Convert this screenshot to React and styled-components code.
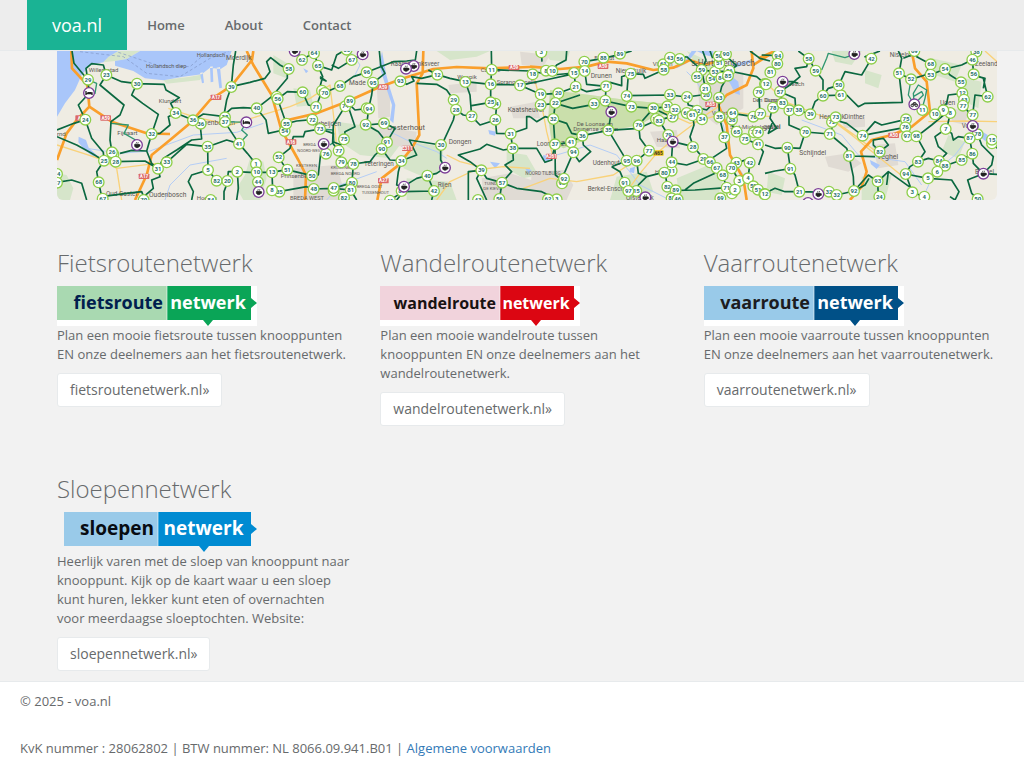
import React from "react";
import styled, { createGlobalStyle } from "styled-components";

const GlobalStyle = createGlobalStyle`
  * {
    box-sizing: border-box;
  }

  body {
    margin: 0;
    background: #f2f2f2;
    color: #676a6c;
    font-family: "Open Sans", "Noto Sans", sans-serif;
    font-size: 13px;
    line-height: 19px;
  }
`;

const Navbar = styled.nav`
  background: #ededed;
  border-bottom: 1px solid #e7eaec;
`;

const NavInner = styled.div`
  max-width: 970px;
  margin: 0 auto;
  display: flex;
  flex-wrap: wrap;
`;

const Brand = styled.a`
  padding: 0 25px;
  background: #1ab394;
  color: white;
  font-size: 18px;
  line-height: 50px;
  text-decoration: none;
`;

const NavLink = styled.a`
  padding: 0 20px;
  color: #676a6c;
  font-weight: 600;
  line-height: 50px;
  text-decoration: none;
`;

const Content = styled.main`
  max-width: 970px;
  margin: 0 auto;
  padding-left: 30px;
  padding-bottom: 10px;
`;

const Map = styled.svg`
  display: block;
  width: 100%;
  border-radius: 0 0 6px 6px;
  font-family: Roboto, "Liberation Sans", sans-serif;
`;

const Networks = styled.div`
  display: grid;
  grid-template-columns: repeat(3, 1fr);
  gap: 50px 30px;
  margin-top: 50px;

  @media only screen and (max-width: 768px) {
    grid-template-columns: 1fr;
  }
`;

const Title = styled.h2`
  margin: 0 0 10px;
  font-size: 24px;
  font-weight: 300;
  line-height: 26px;
`;

const Logo = styled.svg`
  display: block;
  width: 200px;
  height: 40px;
  font-weight: 700;
`;

const Text = styled.p`
  margin: 0 0 9px;
`;

const Button = styled.a`
  display: inline-block;
  padding: 6px 12px;
  background: white;
  border: 1px solid #e7eaec;
  border-radius: 3px;
  color: #676a6c;
  font-size: 14px;
  line-height: 20px;
  text-decoration: none;
  vertical-align: top;
`;

const Footer = styled.footer`
  display: flex;
  flex-direction: column;
  gap: 28px;
  padding: 10px 20px;
  background: white;
  border-top: 1px solid #e7eaec;
`;

const FooterLink = styled.a`
  color: #337ab7;
  text-decoration: none;
`;

// every region of the map has its own origin, dx moves it to its place
// nodes: [x, y, number], pois: [x, y, kind], labels: [x, y, text, size]
const regions = [
  {
    dx: -21,
    water: [
      "M21 18H270L205 18L175 36L160 52L120 60L95 90L75 135L45 175L21 215Z",
      "M270 18H545L530 60L512 72L480 68L455 88L400 95L340 106L285 100L250 78L195 62L195 48L230 42Z",
      "M86 275L108 285L116 308L140 330L130 336L100 310L85 292Z",
      "M480 65L482 112L490 110L488 64ZM500 68L508 130L516 128L510 66ZM450 84L456 115L462 113L458 82Z",
    ],
    green: [
      "M160 52L195 48L230 42L270 18H205L175 36Z",
      "M340 105L420 95L460 88L450 105L350 116Z",
      "M21 385L50 390L70 430L60 465H21Z",
      "M600 340L640 350L650 400L630 465H580L560 430L585 390Z",
      "M670 30L720 60L710 100L670 85Z",
    ],
    roads: [
      "M64 18L66 70L112 120L118 185L80 225L50 265L21 345",
      "M118 185L185 230L290 265L360 267",
      "M610 18L606 45L545 122L480 165L420 235L360 285L305 330L290 390L255 465",
      "M590 18L610 60L665 150L690 240L700 270",
    ],
    minor: [
      "M21 300L100 325L160 345L200 370L215 465",
      "M355 190L430 215L540 240L620 215L720 185",
      "M120 90L118 185M200 370L320 355",
    ],
    streams: ["M110 310L210 325L300 318L430 270L560 262L640 235", "M345 465L360 420L420 360L530 340"],
    routes: [
      "M66 18L72 55L113 104L118 144L85 180L106 224L72 235L21 255",
      "M113 104L108 70L125 56L160 60L169 90L150 120L222 180L210 210L183 230L180 285L186 322",
      "M169 90L215 110L261 116L342 118L348 135L388 158L362 175L377 204",
      "M261 116L245 150L278 175L325 208L305 267L290 318L245 316L210 325",
      "M377 204L355 215L360 240L330 265L305 267",
      "M377 204L405 215L430 226L460 207L525 215",
      "M450 235L455 282L425 285L380 315L340 340L324 371",
      "M106 224L125 280L160 322L162 347",
      "M21 275L80 300L125 325L162 347L140 380L146 412L155 455",
      "M197 350L285 348L324 371L350 352L410 298L473 305L530 285L567 296",
      "M290 318L305 355L324 371L330 395L305 405L310 430L275 460",
      "M21 385L35 395M21 412L65 405L95 415L110 465",
      "M155 455L230 445L275 440L285 465",
      "M557 18L550 60L544 125L530 165L522 210",
      "M544 125L600 112L645 100L660 80L650 50L662 38L690 60L712 72",
      "M522 210L545 190L580 188L620 190L665 155L712 100V72M620 190L648 225L655 265L700 255L709 236L683 162",
      "M525 232L567 296L592 325L618 357L620 382L624 411L625 440",
      "M473 305L474 375L500 407L532 408L535 380L562 380L600 382L666 382L710 374",
      "M474 375L425 390L415 410L430 440L425 465",
      "M562 380L565 430L560 465M666 382L668 436",
      "M534 408L522 440L522 465",
    ],
    paths: ["M113 104L140 115L135 145L118 144", "M183 235L235 240L222 265L262 288L260 300", "M525 230L590 232L575 255L592 270L567 296"],
    badges: [[498, 157, "A17"], [167, 219, "A59"], [282, 394, "A17"], [92, 219, "A4"], [723, 291, "A16"]],
    labels: [
      [116, 80, "Willemstad", 18], [288, 70, "Hollandsch diep", 17], [440, 36, "Hollandsch", 17], [528, 46, "Moerdijk", 20],
      [326, 174, "Klundert", 18], [202, 271, "Fijnaart", 18], [440, 240, "Zevenbergen", 20],
      [168, 452, "Oud Gastel", 19], [297, 456, "Oudenbosch", 20], [21, 274, "rnd", 18],
      [440, 465, "Hoeven", 18], [692, 399, "Prinsenbeek", 18],
    ],
    nodes: [
      [21, 387, 54], [21, 413, 57], [114, 104, 29], [169, 90, 23], [261, 116, 30], [106, 224, 24], [377, 204, 34], [452, 236, 36],
      [429, 226, 36], [305, 267, 32], [190, 328, 27], [186, 322, 26], [197, 350, 28], [162, 347, 25],
      [324, 371, 31], [350, 352, 33], [146, 412, 68], [158, 461, 67], [281, 465, 70], [544, 126, 39],
      [525, 217, 38], [525, 231, 37], [567, 296, 41], [473, 305, 35], [474, 375, 5], [500, 407, 82],
      [532, 408, 20], [562, 380, 2], [618, 357, 1], [620, 382, 10], [624, 411, 44], [666, 382, 13],
      [688, 440, 35], [666, 436, 8], [620, 190, 40], [680, 155, 57], [683, 162, 56], [716, 72, 58],
      [704, 258, 54], [709, 236, 55], [686, 337, 52], [712, 374, 51], [482, 465, 84],
    ],
    pois: [[117, 144, "bed"], [261, 300, "cup"], [589, 232, "bed"], [626, 441, "cup"]],
  },
  {
    dx: 699,
    water: [
      "M276 18L289 90L300 130L316 180L310 235L300 225L306 180L289 130L268 62Z",
      "M595 255L618 260L615 272L598 268ZM40 70L55 78L48 85ZM600 350L630 355L615 370Z",
    ],
    green: [
      "M140 230L250 245L330 300L300 340L210 330L150 290Z",
      "M360 290L460 305L455 380L410 400L340 370Z",
      "M350 400L480 410L500 465H350Z",
      "M650 320L710 330L745 390L700 400L650 370Z",
      "M10 130L60 135L70 180L20 185Z",
      "M440 18H600L560 35L480 45Z",
    ],
    urban: ["M270 245L380 260L375 310L300 300L265 275Z", "M10 370L140 360L170 465H10Z", "M260 115L300 125L300 215L265 220Z", "M475 120L560 110L560 140L480 145Z", "M575 400L660 385L740 410L760 465H580Z"],
    roads: [
      "M400 18L398 85L380 115L388 270L365 310L320 365L275 400L262 465",
      "M-20 228L80 205L170 170L260 130L340 100L430 72L500 66L600 70L720 66",
      "M-20 265L0 300L25 345L48 390L45 465",
    ],
    minor: ["M0 185L60 160L120 120L135 250L140 310", "M440 465L480 410L555 375L640 365L720 370", "M470 330L510 350L590 370"],
    streams: ["M300 260L360 290L440 320L470 340", "M180 18L210 60L195 90", "M110 465L150 420L260 380"],
    routes: [
      "M20 18L36 45L72 22L84 62L125 75L140 30L160 18",
      "M185 45L145 70L125 60M185 45L218 28",
      "M84 62L98 95L90 125L103 143L150 123L190 95L230 82",
      "M-37 162L-8 140L38 142L55 180L78 186L96 137M90 95L108 108L90 100",
      "M268 18L272 60L285 85L250 113L245 150L236 190L230 240L265 260L290 292L275 312L300 345L334 347",
      "M230 82L310 50L350 48L376 45L380 18",
      "M331 108L350 118L372 108L365 95L395 100L442 89L480 100L526 110L602 118L690 120",
      "M380 115L440 118L470 135L491 165L497 194L520 210L545 214L570 240L616 225",
      "M526 110L540 150L545 214M545 182L602 172L602 118L605 74L720 78M605 74L604 18",
      "M497 194L490 225L460 290L452 300L358 285L380 330L334 347L325 380L320 420L340 425L380 400L412 392L440 385L465 368",
      "M452 300L452 345L465 368",
      "M602 172L620 178L616 225L620 265L662 266L710 250V215H720",
      "M668 310L640 315L590 298L570 312L505 330L540 350L574 376L590 400L636 413",
      "M662 266L668 310L670 345L645 360L665 380L636 413M636 413L628 465",
      "M574 376L535 380V465M574 376L560 400L590 465",
      "M180 180L165 185L130 240L128 290L155 300",
      "M236 190L195 195L170 170L195 245L165 260L162 283",
      "M-11 236L20 228L66 224L90 252L130 265L128 295L146 317",
      "M90 252L45 260L40 275L10 275L0 310L-34 337L-10 374",
      "M108 326L92 325L85 390L65 392L-10 374",
      "M146 317L154 352L190 357L240 350L255 330L275 312",
      "M-34 440L50 425L71 432L131 430L182 435L200 465M186 413L131 430",
      "M282 235L230 240M282 235L315 250L290 292M190 357L186 413",
      "M412 392L432 438L425 465M340 440L432 438",
      "M415 75L442 89",
      "M300 465L340 440L320 465",
    ],
    paths: ["M90 252L130 255L132 290L120 300"],
    badges: [[279, 126, "A59"], [672, 68, "A59"], [352, 310, "E311"], [280, 407, "A27"]],
    labels: [
      [177, 120, "Made", 20], [302, 63, "Raamsdonksveer", 19], [291, 256, "Oosterhout", 23], [502, 103, "Waspik", 18],
      [572, 80, "Capelle", 18], [620, 118, "Sprang-Capelle", 18], [653, 201, "Kaatsheuvel", 20], [476, 298, "Dongen", 20],
      [222, 363, "Teteringen", 19], [443, 427, "Rijen", 19], [65, 244, "Terheijden", 19], [18, 367, "KESTEREN", 13],
      [122, 373, "KRUIDENBERG", 12], [122, 390, "BREDA NOORD", 13], [200, 430, "BREDA OOST", 13], [215, 446, "TUSSENHOUT", 13],
      [0, 465, "BREDA WEST", 17], [583, 420, "TUINDORP", 13], [580, 436, "DE KIEVIT", 13], [40, 304, "BREDA", 12],
      [22, 320, "NOORD-WEST", 12],
    ],
    nodes: [
      [72, 25, 64], [36, 45, 62], [84, 62, 65], [185, 45, 67], [170, 14, 66], [230, 82, 96], [249, 113, 95],
      [150, 123, 68], [38, 142, 60], [96, 137, 69], [104, 144, 70], [78, 186, 71], [166, 184, 74],
      [179, 169, 89], [230, 190, 93], [237, 191, 94], [227, 239, 92], [282, 235, 69], [67, 224, 72], [90, 252, 73],
      [162, 283, 75], [146, 317, 77], [108, 326, 76], [154, 352, 79], [190, 357, 78], [291, 292, 91],
      [275, 312, 90], [334, 348, 34], [66, 392, 50], [71, 432, 48], [131, 437, 46], [131, 429, 47], [186, 413, 80],
      [182, 435, 81], [162, 458, 82], [331, 109, 93], [442, 89, 12], [526, 111, 13], [605, 74, 11],
      [602, 118, 16], [690, 121, 17], [491, 165, 29], [498, 194, 28], [545, 214, 27], [616, 176, 24],
      [602, 172, 25], [616, 224, 26], [662, 266, 31], [668, 310, 38], [453, 300, 30], [412, 392, 40],
      [432, 438, 42], [574, 376, 39], [636, 413, 57], [335, 438, 87], [628, 462, 56], [564, 465, 43], [300, 467, 41],
    ],
    pois: [[14, 18, "cup"], [218, 28, "cup"], [371, 63, "cup"], [348, 71, "cup"], [101, 297, "cup"], [465, 368, "cup"], [342, 425, "cup"]],
  },
  {
    dx: 1419,
    water: [
      "M500 18H550V36L525 30ZM560 25L590 35L580 50L565 45Z",
      "M585 70L600 90L625 110L630 150L615 145L600 115L582 95Z",
      "M600 60L660 45L665 52L610 70ZM300 370L315 365L312 385L298 380Z",
      "M500 18L470 55L440 70L435 64L465 48L485 18Z",
      "M40 330L62 335L55 352L38 345ZM-15 370L5 375L-5 385Z",
    ],
    green: [
      "M60 135L180 150L290 165L420 178L440 200L370 215L330 240L235 258L180 250L165 285L100 310L65 290L55 220Z",
      "M470 18L560 60L540 90L500 60Z",
      "M260 395L350 380L370 440L300 465H240Z",
      "M440 400L560 350L580 400L560 465H450Z",
      "M40 18L120 18L110 50L60 45Z",
    ],
    urban: ["M500 95L640 80L640 190L560 240L510 200Z", "M5 380L100 375L130 420L110 465H0Z", "M360 260L440 255L450 310L380 305Z", "M-30 20L60 30L40 65L-25 60Z", "M-60 185L20 170L30 220L-50 220Z"],
    roads: [
      "M0 65L90 72L170 65L230 50L290 55L370 75L430 68L480 45L520 60L560 50",
      "M665 18L670 70L650 120L590 150L565 180",
      "M720 28L670 60M565 180L590 240L600 330L640 400L650 465",
    ],
    minor: [
      "M10 90L35 180L50 260L70 340",
      "M-20 430L60 400L140 410L250 390L310 350L330 330",
      "M400 200L480 235L600 200L720 215",
      "M565 185L520 215L440 275L380 325L330 385L290 440",
    ],
    streams: ["M470 80L500 110L540 180L580 240L600 330L660 420", "M80 330L180 300L260 330L330 420L420 465"],
    routes: [
      "M0 78L67 90L132 84L164 78L163 50M110 18L108 45L80 60L67 78M34 20L36 50",
      "M163 50L220 40L270 28L305 18",
      "M-30 121L60 102L137 85L164 78L170 118L228 124L226 166M-30 121L32 148",
      "M137 125L132 84M137 125L170 140L226 130",
      "M228 124L240 112L275 122L275 95L302 86L340 88L345 100L400 75L420 38L448 42L470 35",
      "M295 90L290 152L420 150L470 156L515 150L525 130",
      "M32 148L85 145L137 125M32 180L76 175L128 190L192 178L226 168L304 185L370 190L412 185L435 195L487 210",
      "M76 175L70 222L75 298L76 390L92 402L105 380L130 322L123 292L157 272L235 256L244 200L226 168",
      "M70 222L110 235L125 265L157 272M123 292L76 298M157 272L160 300L182 320L148 350L130 325",
      "M235 256L290 347L320 347L357 317L330 280L326 240L370 190M235 256L326 250L370 230L425 215",
      "M-52 310L20 310L45 352L65 345L75 298",
      "M0 215L20 230L45 215L70 222M76 175L150 150",
      "M388 228L415 270L428 290L424 352L405 382L412 425L438 436L440 460",
      "M428 290L490 305L522 342L560 370L578 390L590 428L615 434",
      "M490 305L480 275L492 240L488 210M424 352L470 360L522 342",
      "M320 347L325 385L350 395L400 382M350 395L325 420L318 438L290 435M245 365L290 347M245 365L270 380L284 413L295 438",
      "M438 436L495 435L590 428M465 435L490 415L555 385",
      "M518 18L528 45L515 75L520 100L526 130M515 75L555 80L598 78L680 95L705 117",
      "M470 35L515 75M598 78L620 62L585 30M660 18L690 40L720 48",
      "M555 80L568 55L566 33M595 92L575 125L567 158L568 216L583 277L590 310L545 340",
      "M608 205L606 240L620 260L645 282L684 298",
      "M608 205L670 215L690 205L686 142L705 117",
      "M660 353L654 400L683 434L703 447M619 353L605 370L628 408L615 434L590 428M660 353L665 340L620 353",
      "M370 190L412 210",
      "M-84 413L-40 430L35 440L80 462",
      "M540 18L548 40M470 156L475 180L530 195L567 158",
      "M684 298L700 320L686 360",
    ],
    paths: [],
    badges: [[219, 64, "A59"], [542, 178, "A65"], [385, 324, "N65", true], [64, 334, "A261"]],
    labels: [
      [182, 98, "Drunen", 20], [257, 84, "Nieuwkuijk", 19], [480, 62, "'s-Hertogenbosch", 25], [368, 63, "Vlijmen", 18],
      [193, 44, "Elshout", 18], [140, 243, "De Loonse en", 18], [130, 259, "Drunense duinen", 18], [20, 303, "Loon op Zand", 19],
      [188, 360, "Udenhout", 19], [173, 438, "Berkel-Enschot", 19], [600, 252, "Sint-Michielsgestel", 18],
      [380, 290, "Haaren", 18], [668, 170, "Den Dungen", 17], [-14, 389, "NOORD TILBURG", 14], [375, 388, "Helvoirt", 17],
      [288, 465, "Oisterwijk", 19], [545, 210, "Vught", 18],
    ],
    nodes: [
      [34, 22, 3], [8, 88, 18], [48, 77, 8], [67, 78, 10], [163, 50, 70], [132, 84, 15], [164, 78, 14], [220, 38, 88],
      [270, 26, 89], [137, 125, 21], [228, 124, 71], [302, 86, 75], [32, 148, 19], [85, 145, 20],
      [32, 180, 23], [76, 174, 22], [192, 176, 33], [226, 167, 72], [304, 185, 73], [290, 153, 74],
      [420, 149, 33], [400, 58, 61], [420, 38, 43], [449, 42, 56], [401, 74, 58], [471, 156, 24], [370, 190, 30], [412, 184, 31],
      [428, 215, 27], [435, 194, 32], [378, 222, 82], [387, 227, 83], [470, 204, 60], [501, 197, 62], [487, 211, 61],
      [516, 223, 34], [529, 150, 20], [526, 131, 21], [567, 158, 63], [515, 75, 59], [501, 96, 55],
      [545, 101, 54], [555, 80, 53], [568, 55, 51], [566, 33, 50], [588, 28, 90], [574, 98, 84], [598, 77, 86], [594, 92, 85],
      [705, 117, 82], [686, 142, 79], [606, 224, 38], [608, 205, 64], [568, 216, 35], [670, 215, 76], [691, 206, 77],
      [583, 277, 37], [620, 260, 65], [672, 262, 73], [645, 282, 75], [684, 262, 74], [684, 298, 41],
      [70, 222, 32], [235, 256, 35], [157, 272, 36], [123, 292, 41], [75, 298, 37], [130, 322, 94],
      [326, 241, 76], [415, 270, 79], [357, 317, 77], [290, 347, 95], [320, 347, 96], [489, 306, 28],
      [520, 342, 29], [540, 352, 66], [560, 369, 67], [578, 391, 68], [425, 377, 11], [425, 352, 44],
      [403, 383, 80], [412, 425, 82], [437, 436, 89], [284, 413, 91], [319, 438, 15], [295, 438, 97],
      [96, 415, 93], [102, 401, 92], [619, 353, 43], [659, 353, 42], [605, 370, 70], [628, 408, 3],
      [654, 400, 4], [606, 445, 72], [590, 428, 71], [615, 434, 2], [670, 424, 50], [684, 434, 51], [703, 447, 52],
      [571, 460, 69], [425, 460, 85], [443, 463, 46], [80, 463, 3], [54, 463, 62],
    ],
    pois: [[244, 201, "cup"], [428, 290, "cup"], [346, 457, "cup"]],
  },
  {
    dx: 2124,
    water: ["M655 262L668 270L664 290L650 280ZM315 345L345 360L335 372L318 358Z"],
    green: [
      "M200 18H290L260 60L210 50Z", "M10 380L60 400L50 450L5 440Z", "M500 40L590 60L570 110L510 90Z",
      "M550 270L600 290L580 340L530 320Z", "M290 395L380 390L360 465H290Z", "M600 100L650 110L640 190L600 170Z",
      "M300 75L350 90L340 130L300 115Z",
    ],
    urban: ["M180 335L250 325L290 355L250 380L190 365Z", "M320 300L390 295L400 360L340 370Z", "M560 190L610 200L600 240L560 230Z", "M230 230L300 215L300 245L240 250Z"],
    roads: [
      "M-20 40L30 18",
      "M440 18L450 70L485 110L495 200L440 245L380 270L320 285L288 320L305 380L290 425L255 465",
    ],
    minor: ["M10 120L60 170L200 225L260 270L340 335L420 400", "M490 230L600 228L696 230", "M660 18L696 50", "M205 225L265 268L340 325"],
    streams: ["M110 225L230 270L280 330L420 350L470 420", "M600 290L570 330L510 380L470 465"],
    routes: [
      "M-10 30L38 32M100 18L131 41L152 77L174 105L174 152L150 170L136 208L100 196L52 178",
      "M131 41L125 65L90 70L105 95L75 120L45 140L53 175",
      "M22 188L15 220L35 250L10 265L21 235M45 140L90 160L92 190",
      "M174 152L190 130L221 121M174 152L245 150L280 185L300 175L412 172L402 85M221 121L240 80L290 90L305 65L319 41L300 35L345 18",
      "M402 85L410 40L400 18M402 85L438 103L480 90L497 58L455 35L447 18M415 40L440 30L450 18",
      "M497 89L540 72L590 60L622 44L625 20M540 72L555 90L590 112L592 145L550 150L545 175L510 208",
      "M622 44L626 88L655 100L668 155L630 150L623 210M640 95L660 100L655 130",
      "M72 200L72 240L121 261L194 267L210 225L245 235L293 272",
      "M121 261L105 310L67 308L76 371L90 390L103 440",
      "M67 308L30 310L0 300M76 371L30 378L0 385M194 267L245 310L252 333L265 395L267 438",
      "M293 272L330 230L350 240L423 223L421 247L325 265L293 272",
      "M344 320L370 300L355 280L325 285L325 300L344 320M252 333L330 335",
      "M430 270L455 275L480 320L459 350L435 365L422 387L442 442",
      "M455 275L500 240L542 205L510 208",
      "M542 252L510 275L520 305L545 325L522 348L490 340L459 350",
      "M522 348L540 362L517 380L489 400L422 387M540 362L590 345L622 326L614 280L580 275L565 285L560 265L542 252",
      "M0 445L30 430L60 440L103 440L192 442L215 450L267 438L310 390L338 410L340 455",
      "M267 438L300 420L312 400M338 410L370 380L440 430M365 420L370 380",
      "M489 400L560 405L582 440L570 465L555 455M442 442L478 455",
      "M622 326L625 355L655 386L620 400L608 405L620 445L638 462",
      "M638 268L650 300L685 335L680 360L655 386L696 388M681 285L696 310",
      "M556 204L545 252M594 182L610 200L623 240M8 445L0 450",
      "M53 110L85 110L100 115",
    ],
    paths: [
      "M170 75L185 40L190 25L240 38L268 28", "M438 103L430 150L448 180L445 145L460 120L485 135L480 160L470 195M448 180L470 195M445 155L470 140L475 150L460 165",
    ],
    badges: [[386, 271, "A50"]],
    labels: [
      [374, 36, "Nistelrode", 19], [630, 62, "Zeeland", 19], [57, 123, "Heesch", 18], [0, 170, "Dungen", 18],
      [163, 222, "Heeswijk", 19], [238, 222, "Dinther", 19], [103, 330, "Schijndel", 20], [336, 342, "Veghel", 21],
      [525, 180, "Uden", 20], [590, 248, "Volkel", 19], [630, 387, "Boekel", 19], [-5, 253, "gestel", 19],
    ],
    nodes: [
      [38, 32, 94], [37, 56, 80], [16, 82, 81], [131, 41, 58], [152, 77, 59], [3, 118, 12], [45, 140, 57], [174, 152, 60],
      [228, 151, 61], [221, 121, 50], [319, 41, 42], [24, 188, 78], [52, 175, 83], [73, 196, 37], [101, 196, 38],
      [136, 208, 39], [201, 231, 72], [212, 217, 73], [121, 261, 70], [194, 267, 71], [67, 308, 90],
      [76, 371, 91], [103, 440, 21], [252, 333, 81], [293, 272, 74], [344, 320, 82], [267, 438, 92],
      [192, 440, 32], [215, 450, 32], [343, 455, 24], [338, 409, 93], [402, 85, 51], [438, 103, 52], [497, 58, 68],
      [497, 89, 53], [540, 72, 54], [634, 20, 38], [622, 44, 46], [626, 88, 56], [588, 112, 55],
      [592, 145, 12], [597, 164, 43], [594, 182, 77], [668, 155, 62], [556, 204, 8], [535, 196, 9], [510, 208, 10],
      [472, 195, 11], [423, 223, 75], [421, 247, 76], [426, 274, 97], [454, 274, 98], [542, 252, 7],
      [623, 210, 77], [638, 268, 78], [614, 280, 87], [681, 295, 14], [681, 284, 15], [622, 326, 86], [590, 345, 85],
      [522, 348, 84], [540, 362, 88], [517, 380, 6], [489, 400, 5], [459, 350, 83], [422, 387, 94],
      [442, 442, 3], [478, 455, 4], [638, 462, 50], [0, 448, 12], [448, 18, 69],
    ],
    pois: [[53, 110, "cup"], [268, 27, "cup"], [448, 178, "bike"], [623, 243, "cup"], [655, 386, "cup"], [160, 447, "cup"], [129, 474, "cup"]],
  },
];

const networks = [
  {
    title: "Fietsroutenetwerk",
    text: "Plan een mooie fietsroute tussen knooppunten EN onze deelnemers aan het fietsroutenetwerk.",
    site: "fietsroutenetwerk.nl",
    logo: { word: "fietsroute", left: 0, split: 110, right: 194, light: "#a9d9b1", dark: "#0aa557", ink: "#00204e", back: true, size: 18, tip: 151 },
  },
  {
    title: "Wandelroutenetwerk",
    text: "Plan een mooie wandelroute tussen knooppunten EN onze deelnemers aan het wandelroutenetwerk.",
    site: "wandelroutenetwerk.nl",
    logo: { word: "wandelroute", left: 0, split: 120, right: 194, light: "#f1d3dc", dark: "#dc0612", ink: "#191212", back: true, size: 16, tip: 156 },
  },
  {
    title: "Vaarroutenetwerk",
    text: "Plan een mooie vaarroute tussen knooppunten EN onze deelnemers aan het vaarroutenetwerk.",
    site: "vaarroutenetwerk.nl",
    logo: { word: "vaarroute", left: 0, split: 110, right: 194, light: "#99cae9", dark: "#005087", ink: "#1c1c20", back: true, size: 18, tip: 151 },
  },
  {
    title: "Sloepennetwerk",
    text: "Heerlijk varen met de sloep van knooppunt naar knooppunt. Kijk op de kaart waar u een sloep kunt huren, lekker kunt eten of overnachten voor meerdaagse sloeptochten. Website:",
    site: "sloepennetwerk.nl",
    logo: { word: "sloepen", left: 7, split: 101, right: 194, light: "#99cae9", dark: "#008bd2", ink: "#080c12", back: false, size: 19, tip: 147 },
  },
];

const Poi = ({ x, y, kind }) => (
  <g transform={`translate(${x} ${y})`}>
    <circle r="16" fill="white" stroke="#7d3f98" strokeWidth="4" />
    {kind === "cup" && (
      <path d="M-7 -2H6V5Q4 8 0 8Q-5 8 -7 4ZM6 -1H9V4H6M-3 -4L-1 -9M2 -4L4 -9" fill="#222" stroke="#222" strokeWidth="2" />
    )}
    {kind === "bed" && <path d="M-9 -6V6M9 -2V6M-9 2H9M-5 -1H7" fill="none" stroke="#222" strokeWidth="4" />}
    {kind === "bike" && (
      <g fill="none" stroke="#222" strokeWidth="3">
        <circle cx="-6" cy="3" r="4" />
        <circle cx="6" cy="3" r="4" />
        <path d="M-6 3L-2 -5H4L6 3M-2 -5L1 3" />
      </g>
    )}
  </g>
);

const Layer = ({ render }) =>
  regions.map((region) => (
    <g key={region.dx} transform={`translate(${region.dx} -18)`}>
      {render(region)}
    </g>
  ));

const RouteMap = () => (
  <Map viewBox="0 0 2820 447" role="img" aria-label="Kaart met knooppunten">
    <rect width="2820" height="447" fill="#efece3" />
    <Layer
      render={(r) => (
        <>
          <path d={r.green.join("")} fill="#d6e5ca" />
          {r.urban && <path d={r.urban.join("")} fill="#e0dbd4" />}
          <path d={r.water.join("")} fill="#a9c6fa" />
        </>
      )}
    />
    <path d={regions[2].green[0]} transform="translate(1419 -18)" fill="#cadfab" />
    <Layer
      render={(r) => (
        <g fill="none" strokeLinejoin="round">
          <path d={r.streams.join("")} stroke="#b4cdf6" strokeWidth="3" />
          <path d={r.minor.join("")} stroke="#f9d27a" strokeWidth="4" />
          <path d={r.roads.join("")} stroke="#fa9f2b" strokeWidth="8" />
        </g>
      )}
    />
    <path
      d="M90 20L220 35L290 85L390 95L480 40L535 20M205 22L320 60L420 65L470 22"
      transform="translate(-21 -18)"
      fill="none"
      stroke="#8196c4"
      strokeWidth="2"
      strokeDasharray="9 7"
    />
    <Layer
      render={(r) =>
        r.labels.map(([x, y, label, size]) => (
          <text key={label} x={x} y={y} fontSize={size} fill="#5c5955">
            {label}
          </text>
        ))
      }
    />
    <Layer
      render={(r) => (
        <g fill="none" strokeLinejoin="round">
          <path d={r.paths.join("")} stroke="#2f9670" strokeWidth="4" />
          <path d={r.routes.join("")} stroke="#0b6840" strokeWidth="5" />
        </g>
      )}
    />
    <Layer
      render={(r) =>
        r.badges.map(([x, y, label, yellow]) => (
          <g key={label + x}>
            <rect x={x - 16} y={y - 8} width="32" height="16" rx="2" fill={yellow ? "#f4c414" : "#dc6868"} />
            <text x={x} y={y + 5} fontSize="14" fontWeight="700" textAnchor="middle" fill={yellow ? "#333" : "white"}>
              {label}
            </text>
          </g>
        ))
      }
    />
    <Layer
      render={(r) => (
        <>
          {r.nodes.map(([x, y, number]) => (
            <g key={`${x}-${y}`}>
              <circle cx={x} cy={y} r="16" fill="white" stroke="#8fcf4b" strokeWidth="4" />
              <text x={x} y={y + 6} fontSize="18" fontWeight="700" textAnchor="middle" fill="#26716a">
                {number}
              </text>
            </g>
          ))}
          {r.pois.map(([x, y, kind]) => (
            <Poi key={`${x}-${y}`} x={x} y={y} kind={kind} />
          ))}
        </>
      )}
    />
  </Map>
);

const NetworkLogo = ({ logo }) => {
  const { word, left, split, right, light, dark, ink, back, size, tip } = logo;
  return (
    <Logo viewBox="0 0 200 40" role="img" aria-label={`${word}netwerk`}>
      {back && <rect width="200" height="40" fill="white" />}
      <rect x={left} width={split - left} height="34" fill={light} />
      <rect x={split} width={right - split} height="34" fill={dark} />
      <path d={`M${split} 0V34`} stroke="white" strokeOpacity="0.6" />
      <path d={`M${right} 12L200 17L${right} 22ZM${tip - 5} 34H${tip + 5}L${tip} 40Z`} fill={dark} />
      <text x={split - 4} y="23" fontSize={size} textAnchor="end" fill={ink}>
        {word}
      </text>
      <text x={(split + right) / 2 - 1} y="23" fontSize={size} textAnchor="middle" fill="white">
        netwerk
      </text>
    </Logo>
  );
};

const App = () => (
  <>
    <GlobalStyle />
    <Navbar>
      <NavInner>
        <Brand href="#">voa.nl</Brand>
        <NavLink href="#home">Home</NavLink>
        <NavLink href="#about">About</NavLink>
        <NavLink href="#contact">Contact</NavLink>
      </NavInner>
    </Navbar>
    <Content>
      <RouteMap />
      <Networks>
        {networks.map(({ title, text, site, logo }) => (
          <section key={title}>
            <Title>{title}</Title>
            <NetworkLogo logo={logo} />
            <Text>{text}</Text>
            <Button href={`#${site}`}>{site}»</Button>
          </section>
        ))}
      </Networks>
    </Content>
    <Footer>
      <div>© 2025 - voa.nl</div>
      <div>
        KvK nummer : 28062802 | BTW nummer: NL 8066.09.941.B01 |{" "}
        <FooterLink href="#voorwaarden">Algemene voorwaarden</FooterLink>
      </div>
    </Footer>
  </>
);

export default App;
